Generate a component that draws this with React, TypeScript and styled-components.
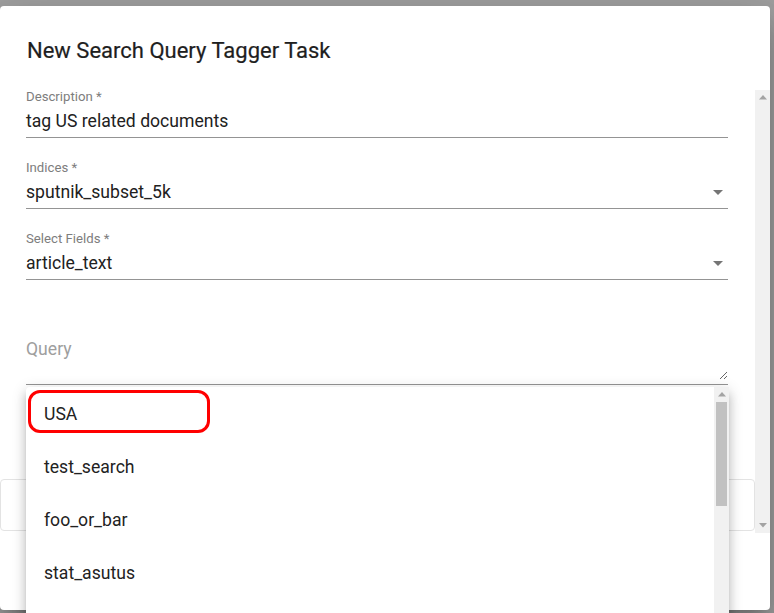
import styled, { createGlobalStyle } from "styled-components";

const GlobalStyle = createGlobalStyle`
  html, body {
    margin: 0;
    padding: 0;
    overflow: hidden;
    background: #a1a1a1;
    font-family: Roboto, "Liberation Sans", Arial, sans-serif;
  }
`;

const Page = styled.div`
  padding-top: 6px;
  width: 774px;
  height: 613px;
  box-sizing: border-box;
`;

const Dialog = styled.div`
  position: relative;
  width: 770px;
  height: 604px;
  background: #fff;
  border-radius: 4px;
  box-shadow: 0 11px 15px -7px rgba(0, 0, 0, 0.2),
    0 24px 38px 3px rgba(0, 0, 0, 0.14), 0 9px 46px 8px rgba(0, 0, 0, 0.12);
  display: flex;
  flex-direction: column;
`;

const Title = styled.h2`
  margin: 0;
  padding: 29px 27px 22px;
  font-size: 22px;
  font-weight: 400;
  line-height: 32px;
  color: #1e1e1e;
  -webkit-text-stroke: 0.2px #1e1e1e;
`;

const ScrollArea = styled.div`
  display: flex;
  height: 444px;
`;

const ScrollContent = styled.div`
  flex: 1;
  overflow: hidden;
  display: flex;
  flex-direction: column;
`;

const Form = styled.div`
  display: flex;
  flex-direction: column;
  gap: 22px;
  padding: 0 27px 0 26px;
`;

const Field = styled.div`
  display: flex;
  flex-direction: column;
`;

const Label = styled.label`
  font-size: 13.2px;
  line-height: 16px;
  height: 16px;
  color: #7d7d7d;
  margin-bottom: 4px;
`;

const Value = styled.div`
  display: flex;
  align-items: flex-start;
  font-size: 17.6px;
  line-height: 24px;
  color: #212121;
  padding-bottom: 4px;
  border-bottom: 1px solid #949494;
`;

const ValueText = styled.span`
  flex: 1;
`;

const DropIcon = styled.svg`
  width: 24px;
  height: 24px;
  margin-right: -2px;
  fill: #757575;
`;

const TextAreaWrap = styled.div`
  display: flex;
  padding-bottom: 4px;
  border-bottom: 1px solid #949494;
`;

const TextArea = styled.textarea`
  flex: 1;
  height: 58px;
  box-sizing: border-box;
  padding: 15px 0 19px;
  border: none;
  outline: none;
  resize: vertical;
  font-family: Roboto, "Liberation Sans", Arial, sans-serif;
  font-size: 17.6px;
  line-height: 24px;
  color: #212121;
  background: transparent;
  &::placeholder {
    color: #9e9e9e;
  }
`;

const Card = styled.div`
  margin-top: 94px;
  height: 52px;
  flex-shrink: 0;
  border: 1px solid #e3e3e3;
  border-radius: 4px;
  box-sizing: border-box;
`;

const Scrollbar = styled.div<{ $top?: number }>`
  width: 15px;
  margin-top: ${(p) => p.$top ?? 0}px;
  background: #f1f1f1;
  display: flex;
  flex-direction: column;
  align-items: center;
`;

const ArrowBox = styled.div`
  height: 15px;
  width: 15px;
  display: flex;
  align-items: center;
  justify-content: center;
  flex-shrink: 0;
`;

const Thumb = styled.div<{ $height: number }>`
  width: 11px;
  height: ${(p) => p.$height}px;
  background: #c1c1c1;
`;

const Spacer = styled.div`
  flex: 1;
`;

const Footer = styled.div`
  flex: 1;
`;

const Menu = styled.div`
  position: absolute;
  left: 26px;
  top: 381px;
  width: 703px;
  height: 260px;
  background: #fff;
  border-radius: 4px;
  box-shadow: 0 5px 5px -3px rgba(0, 0, 0, 0.2),
    0 8px 10px 1px rgba(0, 0, 0, 0.14), 0 3px 14px 2px rgba(0, 0, 0, 0.12);
  display: flex;
`;

const MenuList = styled.ul`
  flex: 1;
  margin: 0;
  padding: 0;
  list-style: none;
`;

const MenuItem = styled.li`
  position: relative;
  padding: 15px 18px 13px;
  font-size: 17.6px;
  line-height: 25px;
  color: #222;
`;

const Highlight = styled.span`
  position: absolute;
  left: 2px;
  top: 3px;
  width: 182px;
  height: 43px;
  box-sizing: border-box;
  border: 3px solid #ff0000;
  border-radius: 12px;
`;

function Arrow({ down }: { down?: boolean }) {
  return (
    <svg width="8" height="5" viewBox="0 0 8 5">
      <polygon
        points={down ? "0,0 8,0 4,4.5" : "0,4.5 8,4.5 4,0"}
        fill="#a3a3a3"
      />
    </svg>
  );
}

function SelectField({ label, value }: { label: string; value: string }) {
  return (
    <Field>
      <Label>{label}</Label>
      <Value>
        <ValueText>{value}</ValueText>
        <DropIcon viewBox="0 0 24 24">
          <path d="M7 10l5 5 5-5z" />
        </DropIcon>
      </Value>
    </Field>
  );
}

const options = ["USA", "test_search", "foo_or_bar", "stat_asutus"];

export default function App() {
  return (
    <Page>
      <GlobalStyle />
      <Dialog>
        <Title>New Search Query Tagger Task</Title>
        <ScrollArea>
          <ScrollContent>
            <Form>
              <Field>
                <Label>Description *</Label>
                <Value>
                  <ValueText>tag US related documents</ValueText>
                </Value>
              </Field>
              <SelectField label="Indices *" value="sputnik_subset_5k" />
              <SelectField label="Select Fields *" value="article_text" />
              <Field>
                <Label />
                <TextAreaWrap>
                  <TextArea placeholder="Query" />
                </TextAreaWrap>
              </Field>
            </Form>
            <Card />
          </ScrollContent>
          <Scrollbar $top={1}>
            <ArrowBox>
              <Arrow />
            </ArrowBox>
            <Spacer />
            <ArrowBox>
              <Arrow down />
            </ArrowBox>
          </Scrollbar>
        </ScrollArea>
        <Footer />
        <Menu>
          <MenuList>
            {options.map((o, i) => (
              <MenuItem key={o}>
                {i === 0 && <Highlight />}
                {o}
              </MenuItem>
            ))}
          </MenuList>
          <Scrollbar>
            <ArrowBox>
              <Arrow />
            </ArrowBox>
            <Thumb $height={104} />
          </Scrollbar>
        </Menu>
      </Dialog>
    </Page>
  );
}
